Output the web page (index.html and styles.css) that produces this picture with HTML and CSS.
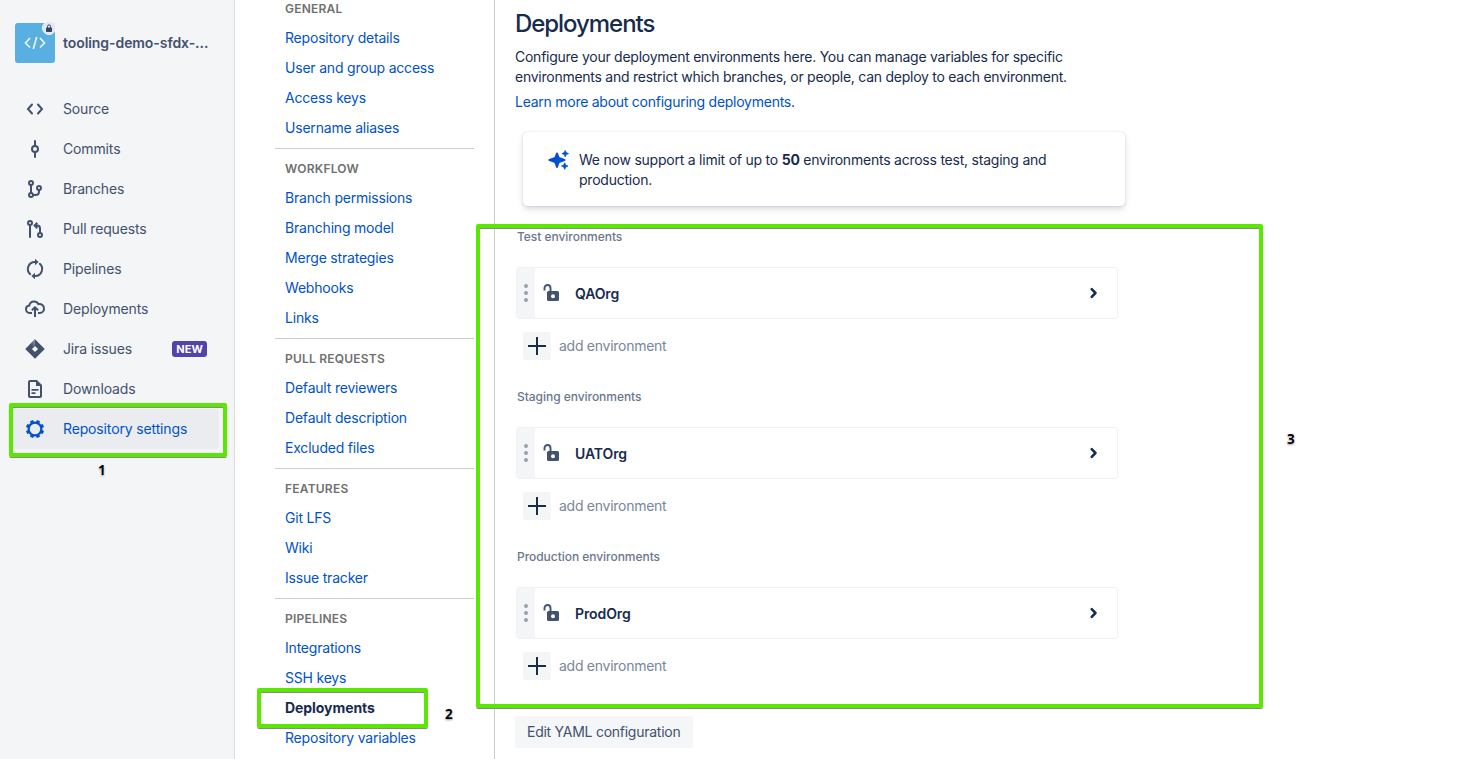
FILE: index.html
```
<!DOCTYPE html>
<html lang="en">
<head>
<meta charset="utf-8">
<title>Deployments</title>
<link rel="stylesheet" href="styles.css">
</head>
<body>
<div class="app">
  <aside class="sidebar">
    <div class="repo">
      <div class="avatar">
        <svg width="22" height="14" viewBox="0 0 22 14" fill="none" stroke="#e9f5fd" stroke-width="1.7"><path d="M6 2L1.500 7 6 11.500M16 2l4.500 5-4.500 4.500M12.700 1L9.300 13"/></svg>
        <span class="lock"><svg width="8" height="9" viewBox="0 0 8 9"><rect x="1" y="3.500" width="6" height="4.500" rx=".8" fill="#344563"/><path d="M2.500 4V2.400a1.500 1.500 0 013 0V4" fill="none" stroke="#344563"/></svg></span>
      </div>
      <span class="repo-name">tooling-demo-sfdx-...</span>
    </div>
    <nav class="menu">
      <a class="item"><svg class="icon" viewBox="0 0 24 24"><path d="M9 7.500L5 12l4 4.500M15 7.500l4 4.500-4 4.500" stroke-linecap="round"/></svg><span>Source</span></a>
      <a class="item"><svg class="icon" viewBox="0 0 24 24"><circle cx="12" cy="12" r="3"/><path d="M12 4v5M12 15v5" stroke-linecap="round"/></svg><span>Commits</span></a>
      <a class="item"><svg class="icon" viewBox="0 0 24 24"><circle cx="8" cy="6" r="2"/><circle cx="8" cy="18" r="2"/><circle cx="16" cy="11" r="2"/><path d="M8 8v8M16 13v1.500c0 2-1 3.500-3.500 3.500H10"/></svg><span>Branches</span></a>
      <a class="item"><svg class="icon" viewBox="0 0 24 24"><circle cx="7" cy="6" r="2"/><circle cx="17" cy="18" r="2"/><path d="M7 8v12" stroke-linecap="round"/><path d="M17 16v-4.500c0-2-.8-3-2.800-3H12.500M14.300 5.800l-2.700 2.700 2.700 2.700"/></svg><span>Pull requests</span></a>
      <a class="item"><svg class="icon" viewBox="0 0 24 24"><path d="M7.200 17.200A7 7 0 0112 5h1M16.800 6.800A7 7 0 0112 19h-1" stroke-linecap="round"/><path d="M12 1.800l3.600 3.200-3.600 3.300zM12 22.200L8.400 19l3.600-3.300z" fill="currentColor" stroke="none"/></svg><span>Pipelines</span></a>
      <a class="item"><svg class="icon" viewBox="0 0 24 24"><path d="M9 16H6.600A3.800 3.800 0 013 12.200 3.700 3.700 0 016.300 8.500C6.800 6.100 8.600 4.400 11 4.400c2 0 3.600 1 4.300 2.700 3.300-.5 5.700 1.500 5.700 4.400 0 2.500-1.700 4.500-4.200 4.500H15"/><path d="M12 20v-8.500M8.900 13.300L12 10.200l3.100 3.100" stroke-linejoin="round"/></svg><span>Deployments</span></a>
      <a class="item"><svg class="icon" viewBox="0 0 24 24"><defs><linearGradient id="jl" x1="1" y1="0" x2="0" y2="1"><stop offset="0" stop-color="#97a0af"/><stop offset=".55" stop-color="#42526e"/></linearGradient></defs><path fill="#42526e" stroke="none" fill-rule="evenodd" d="M12 2.200L21.800 12 12 21.800 2.200 12zM12 8.900L8.900 12l3.100 3.100 3.100-3.100z"/><path fill="url(#jl)" stroke="none" d="M12 2.200v6.700L6.400 14c-1.500-2-1-4.600.8-6.800z"/></svg><span>Jira issues</span><b class="badge">NEW</b></a>
      <a class="item"><svg class="icon" viewBox="0 0 24 24"><path d="M7 4h6.500L18 8.500V19a1 1 0 01-1 1H7a1 1 0 01-1-1V5a1 1 0 011-1z"/><path d="M13 3.500L18.500 9H13z" fill="currentColor" stroke="none"/><path d="M8.500 12.800h7M8.500 16.200h4" stroke-width="1.800"/></svg><span>Downloads</span></a>
      <a class="item selected"><svg class="icon" viewBox="0 0 24 24"><circle cx="12" cy="12" r="6.400" stroke-width="2.300"/><g stroke-width="3.400" transform="rotate(22.500 12 12)"><path id="tooth" d="M12 5.600V2.900"/><use href="#tooth" transform="rotate(45 12 12)"/><use href="#tooth" transform="rotate(90 12 12)"/><use href="#tooth" transform="rotate(135 12 12)"/><use href="#tooth" transform="rotate(180 12 12)"/><use href="#tooth" transform="rotate(225 12 12)"/><use href="#tooth" transform="rotate(270 12 12)"/><use href="#tooth" transform="rotate(315 12 12)"/></g></svg><span>Repository settings</span></a>
    </nav>
  </aside>

  <nav class="settings">
    <section><h2>GENERAL</h2><a>Repository details</a><a>User and group access</a><a>Access keys</a><a>Username aliases</a></section>
    <section><h2>WORKFLOW</h2><a>Branch permissions</a><a>Branching model</a><a>Merge strategies</a><a>Webhooks</a><a>Links</a></section>
    <section><h2>PULL REQUESTS</h2><a>Default reviewers</a><a>Default description</a><a>Excluded files</a></section>
    <section><h2>FEATURES</h2><a>Git LFS</a><a>Wiki</a><a>Issue tracker</a></section>
    <section><h2>PIPELINES</h2><a>Integrations</a><a>SSH keys</a><a class="current">Deployments</a><a>Repository variables</a></section>
  </nav>

  <main class="content">
    <h1>Deployments</h1>
    <p class="intro">Configure your deployment environments here. You can manage variables for specific<br>environments and restrict which branches, or people, can deploy to each environment.</p>
    <p class="learn"><a>Learn more about configuring deployments</a>.</p>
    <div class="notice">
      <svg class="sparkle" width="22" height="22" viewBox="0 0 22 22" fill="#0052cc"><path d="M9 2.400c.6 0 .9.300 1.100 1l.9 2.700c.3.900.6 1.200 1.500 1.500l4.200 1.500c1.200.5 1.200 1.400 0 1.900L12.500 12.600c-.9.300-1.200.6-1.500 1.500L10.100 17c-.4 1.300-1.800 1.300-2.200 0L7 14.100c-.3-.9-.6-1.200-1.500-1.500L1.200 11c-1.200-.5-1.200-1.400 0-1.900l4.300-1.500C6.400 7.300 6.700 7 7 6.100L7.900 3.400C8.100 2.700 8.400 2.400 9 2.400z"/><path d="M17.200.4l1 2.200 2.300 1-2.300 1-1 2.300-1-2.300-2.300-1 2.300-1zM16.700 12.800l1 2.300 2.300 1-2.300 1-1 2.300-1-2.300-2.300-1 2.300-1z" stroke="#0052cc" stroke-width=".7" stroke-linejoin="round"/></svg>
      <p>We now support a limit of up to <b>50</b> environments across test, staging and<br>production.</p>
    </div>
    <section class="group">
      <h3>Test environments</h3>
      <div class="env"><span class="grip"><i></i><i></i><i></i></span><svg class="unlock" width="18" height="20" viewBox="0 0 18 20"><path d="M1.500 7.500V5a3 3 0 016 0v3" fill="none" stroke="#42526e" stroke-width="1.900"/><path fill="#42526e" fill-rule="evenodd" d="M5.500 8h9A1.500 1.500 0 0116 9.500v7a1.500 1.500 0 01-1.500 1.500h-9A1.500 1.500 0 014 16.500v-7A1.500 1.500 0 015.500 8zM10 11.200a2 2 0 100 4 2 2 0 000-4z"/></svg><span class="env-name">QAOrg</span><svg class="chevron" width="10" height="14" viewBox="0 0 10 14"><path d="M2.700 3.200L6.500 7l-3.800 3.800"/></svg></div>
      <div class="add"><span class="plus"></span>add environment</div>
    </section>
    <section class="group">
      <h3>Staging environments</h3>
      <div class="env"><span class="grip"><i></i><i></i><i></i></span><svg class="unlock" width="18" height="20" viewBox="0 0 18 20"><path d="M1.500 7.500V5a3 3 0 016 0v3" fill="none" stroke="#42526e" stroke-width="1.900"/><path fill="#42526e" fill-rule="evenodd" d="M5.500 8h9A1.500 1.500 0 0116 9.500v7a1.500 1.500 0 01-1.500 1.500h-9A1.500 1.500 0 014 16.500v-7A1.500 1.500 0 015.500 8zM10 11.200a2 2 0 100 4 2 2 0 000-4z"/></svg><span class="env-name">UATOrg</span><svg class="chevron" width="10" height="14" viewBox="0 0 10 14"><path d="M2.700 3.200L6.500 7l-3.800 3.800"/></svg></div>
      <div class="add"><span class="plus"></span>add environment</div>
    </section>
    <section class="group">
      <h3>Production environments</h3>
      <div class="env"><span class="grip"><i></i><i></i><i></i></span><svg class="unlock" width="18" height="20" viewBox="0 0 18 20"><path d="M1.500 7.500V5a3 3 0 016 0v3" fill="none" stroke="#42526e" stroke-width="1.900"/><path fill="#42526e" fill-rule="evenodd" d="M5.500 8h9A1.500 1.500 0 0116 9.500v7a1.500 1.500 0 01-1.500 1.500h-9A1.500 1.500 0 014 16.500v-7A1.500 1.500 0 015.500 8zM10 11.200a2 2 0 100 4 2 2 0 000-4z"/></svg><span class="env-name">ProdOrg</span><svg class="chevron" width="10" height="14" viewBox="0 0 10 14"><path d="M2.700 3.200L6.500 7l-3.800 3.800"/></svg></div>
      <div class="add"><span class="plus"></span>add environment</div>
    </section>
    <button class="yaml">Edit YAML configuration</button>
  </main>

  <div class="mark mark-1"></div><span class="num num-1">1</span>
  <div class="mark mark-2"></div><span class="num num-2">2</span>
  <div class="mark mark-3"></div><span class="num num-3">3</span>
</div>
</body>
</html>
```
FILE: styles.css
```
* { box-sizing: border-box; }
body { margin: 0; background: #fff; font: 14px/20px Inter, "Liberation Sans", sans-serif; color: #172b4d; }
h1, h2, h3, p { margin: 0; }
.app { position: relative; display: flex; width: 1468px; height: 759px; overflow: hidden; }

/* Repository sidebar */
.sidebar { width: 235px; flex: none; background: #f4f5f7; border-right: 1px solid #dcdde1; color: #42526e; }
.repo { display: flex; align-items: center; gap: 8px; height: 89px; padding: 0 0 3px 15px; }
.avatar { position: relative; display: flex; align-items: center; justify-content: center; width: 40px; height: 40px; border-radius: 3px; background: #59afe1; }
.lock { position: absolute; top: -2px; right: -1px; display: flex; align-items: center; justify-content: center; width: 14px; height: 14px; border-radius: 50%; background: #e4e6ea; border: 1.5px solid #f4f5f7; }
.repo-name { font-weight: 600; letter-spacing: -0.07px; white-space: nowrap; }
.menu { padding: 0 15px 0 8px; }
.item { display: flex; align-items: center; height: 40px; padding-left: 15px; border-radius: 3px; letter-spacing: -0.14px; white-space: nowrap; }
.icon { width: 24px; height: 24px; margin-right: 16px; fill: none; stroke: currentColor; stroke-width: 2; }
.badge { margin-left: auto; margin-right: 12px; height: 16px; padding: 0 4px; border-radius: 3px; background: #5243aa; color: #fff; font-size: 11px; line-height: 16px; letter-spacing: 0.1px; }
.selected { background: #ebecf0; color: #0052cc; }

/* Settings navigation */
.settings { width: 260px; flex: none; margin-top: -7px; padding: 0 20px 0 40px; border-right: 1px solid #ccc; }
.settings section { padding: 0 10px 5px; }
.settings section + section { border-top: 1px solid #ccc; padding-top: 4px; }
.settings h2 { height: 30px; font-size: 12px; font-weight: 600; line-height: 32px; color: #707070; letter-spacing: 0.22px; }
.settings a { display: block; height: 30px; line-height: 30px; color: #0052cc; letter-spacing: -0.2px; white-space: nowrap; }
.settings .current { color: #172b4d; font-weight: 700; letter-spacing: -0.06px; }

/* Main column */
.content { padding: 10px 0 0 20px; width: 640px; }
h1 { height: 37px; font-size: 24px; font-weight: 500; line-height: 28px; letter-spacing: -1.05px; }
.intro, .learn, .notice p { white-space: nowrap; letter-spacing: -0.255px; }
.notice p { letter-spacing: -0.23px; }
.learn { margin-top: 5px; }
.learn a { color: #0052cc; }
.notice { display: flex; width: 602px; height: 74px; margin: 20px 0 0 8px; padding: 18px 25px; gap: 9px; border-radius: 4px; box-shadow: 0 3px 6px -1px rgba(9,30,66,.22), 0 0 1px rgba(9,30,66,.3); }
.notice b { font-weight: 700; }
.sparkle { flex: none; }
.group { height: 160px; padding-left: 1px; }
.notice + .group { margin-top: 21px; }
.group h3 { height: 40px; padding: 0 0 0 1px; font-size: 12px; font-weight: 500; line-height: 20px; letter-spacing: -0.04px; color: #6b778c; }
.env { display: flex; align-items: center; width: 602px; height: 52px; border: 1px solid #f1f2f4; border-radius: 3px; }
.grip { display: flex; flex-direction: column; align-items: center; justify-content: center; gap: 3px; align-self: stretch; width: 18px; background: #f4f5f7; }
.grip i { width: 4px; height: 4px; border-radius: 50%; background: #97a0af; }
.unlock { margin: 0 14px 0 8px; }
.env-name { font-weight: 600; letter-spacing: -0.1px; padding-top: 2px; }
.chevron { margin: 0 18px 0 auto; fill: none; stroke: #172b4d; stroke-width: 2.500; stroke-linecap: round; stroke-linejoin: round; }
.add { display: flex; align-items: center; gap: 8px; margin: 13px 0 0 7px; color: #7a869a; letter-spacing: -0.27px; }
.plus { width: 28px; height: 28px; border-radius: 3px; background: linear-gradient(#172b4d, #172b4d) 5px 13px/18px 2px no-repeat, linear-gradient(#172b4d, #172b4d) 13px 5px/2px 18px no-repeat, #f4f5f7; }
.yaml { display: block; margin-top: 9px; width: 178px; height: 32px; padding: 0 12px; border: 0; border-radius: 3px; background: #f5f6f8; color: #42526e; font: 14px/32px Inter, sans-serif; letter-spacing: -0.26px; text-align: left; white-space: nowrap; }

/* Callouts laid over the page */
.mark { position: absolute; border: 4px solid #5be800; border-radius: 2px; box-shadow: 0 1px 0 #8a8a8a, inset 0 1px 0 #8a8a8a; }
.mark-1 { left: 9px; top: 403px; width: 218px; height: 54px; }
.mark-2 { left: 257px; top: 688px; width: 171px; height: 40px; }
.mark-3 { left: 476px; top: 224px; width: 787px; height: 484px; }
.num { position: absolute; font: bold 13.500px/16px "Open Sans", sans-serif; color: #000; text-shadow: 0 0 1px #fff, 0 0 1px #fff, 0 1px 2px #888; }
.num-1 { left: 98px; top: 462px; }
.num-2 { left: 445px; top: 706px; }
.num-3 { left: 1287px; top: 431px; }
```
